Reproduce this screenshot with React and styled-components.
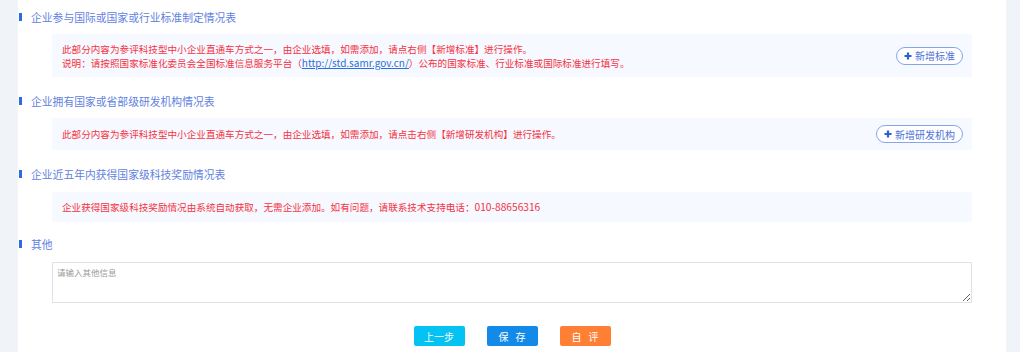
import React from 'react'
import styled, { createGlobalStyle } from "styled-components";

const GlobalStyle = createGlobalStyle`
  html, body {
    margin: 0;
    padding: 0;
    background: #f0f3f7;
    font-family: "Noto Sans CJK SC", "Noto Sans", sans-serif;
  }
`;

const Page = styled.div`
  margin-left: 18px;
  width: 988px;
  min-height: 352px;
  background: #ffffff;
  padding-top: 7px;
  box-sizing: border-box;
`;

const Section = styled.section`
  margin-top: ${p => p.$top || 0}px;
`;

const Title = styled.div`
  display: flex;
  align-items: center;
  height: 20px;
  padding-left: 1px;
  font-size: 10.8px;
  color: #5f82de;
  &::before {
    content: "";
    width: 3px;
    height: 8px;
    background: #2e6be2;
    margin-right: 9px;
  }
`;

const InfoBox = styled.div`
  margin: ${p => p.$gap || 7}px 34px 0;
  background: #f6f9ff;
  min-height: ${p => p.$h || 30}px;
  padding: 0 9px 0 10px;
  box-sizing: border-box;
  display: flex;
  align-items: center;
  justify-content: space-between;
`;

const Notes = styled.div`
  font-size: 9.6px;
  line-height: 14px;
  color: #f5333f;
`;

const Link = styled.a`
  color: #2a6fd6;
  text-decoration: underline;
  font-size: 10px;
`;

const Phone = styled.span`
  font-size: 10.2px;
`;

const AddButton = styled.button`
  display: flex;
  align-items: center;
  gap: 3px;
  height: 18px;
  padding: 0 7px;
  border: 1px solid #86a5ef;
  border-radius: 10px;
  background: #ffffff;
  color: #4c72d6;
  font-family: inherit;
  font-size: 10px;
  cursor: pointer;
`;

const Plus = styled.svg`
  width: 8px;
  height: 8px;
`;

const TextArea = styled.textarea`
  display: block;
  margin: 8px 34px 0;
  width: 920px;
  height: 41px;
  box-sizing: border-box;
  border: 1px solid #dfe2e8;
  padding: 3px 4px;
  font-family: inherit;
  font-size: 8.5px;
  color: #333;
  resize: vertical;
  outline: none;
  &::placeholder {
    color: #9a9a9a;
  }
`;

const Actions = styled.div`
  display: flex;
  justify-content: center;
  gap: 22px;
  margin-top: 23px;
`;

const ActionButton = styled.button`
  width: 51px;
  height: 20px;
  padding: 0;
  border: none;
  border-radius: 2px;
  background: ${p => p.$bg};
  color: #ffffff;
  font-family: inherit;
  font-size: 10px;
  white-space: nowrap;
  letter-spacing: ${p => p.$spread || 0}px;
  text-indent: ${p => p.$spread || 0}px;
  cursor: pointer;
`;

const PlusIcon = () => (
  <Plus viewBox="0 0 8 8">
    <path d="M4 0.5v7M0.5 4h7" stroke="#2e5fd0" strokeWidth="2.2" />
  </Plus>
);

const App = () => {
  return (
    <>
      <GlobalStyle />
      <Page>
        <Section>
          <Title>企业参与国际或国家或行业标准制定情况表</Title>
          <InfoBox $h={43}>
            <Notes>
              <div>此部分内容为参评科技型中小企业直通车方式之一，由企业选填，如需添加，请点右侧【新增标准】进行操作。</div>
              <div>
                说明：请按照国家标准化委员会全国标准信息服务平台（<Link href="#">http://std.samr.gov.cn/</Link>）公布的国家标准、行业标准或国际标准进行填写。
              </div>
            </Notes>
            <AddButton><PlusIcon />新增标准</AddButton>
          </InfoBox>
        </Section>

        <Section $top={14}>
          <Title>企业拥有国家或省部级研发机构情况表</Title>
          <InfoBox $h={32} $gap={7}>
            <Notes>此部分内容为参评科技型中小企业直通车方式之一，由企业选填，如需添加，请点击右侧【新增研发机构】进行操作。</Notes>
            <AddButton><PlusIcon />新增研发机构</AddButton>
          </InfoBox>
        </Section>

        <Section $top={14}>
          <Title>企业近五年内获得国家级科技奖励情况表</Title>
          <InfoBox $h={30} $gap={8}>
            <Notes>企业获得国家级科技奖励情况由系统自动获取，无需企业添加。如有问题，请联系技术支持电话：<Phone>010-88656316</Phone></Notes>
          </InfoBox>
        </Section>

        <Section $top={12}>
          <Title>其他</Title>
          <TextArea placeholder="请输入其他信息" />
        </Section>

        <Actions>
          <ActionButton $bg="#04c3f3">上一步</ActionButton>
          <ActionButton $bg="#148ae8" $spread={7}>保存</ActionButton>
          <ActionButton $bg="#ff7f35" $spread={7}>自评</ActionButton>
        </Actions>
      </Page>
    </>
  )
}

export default App;
